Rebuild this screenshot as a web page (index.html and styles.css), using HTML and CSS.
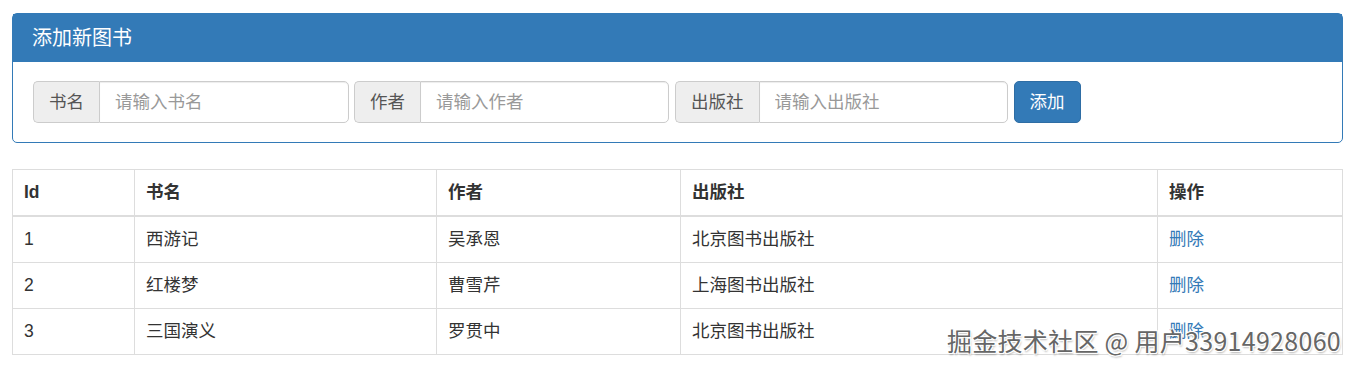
FILE: index.html
```html
<!DOCTYPE html>
<html lang="zh-CN">
<head>
    <meta charset="UTF-8">
    <meta name="viewport" content="width=device-width, initial-scale=1.0">
    <title>图书管理</title>
    <link rel="stylesheet" href="styles.css">
</head>
<body>
<div class="container">
    <!-- Add book panel -->
    <div class="panel">
        <div class="panel-heading">添加新图书</div>
        <div class="panel-body">
            <form class="form-inline">
                <div class="input-group">
                    <span class="addon">书名</span>
                    <input type="text" class="form-control" placeholder="请输入书名">
                </div>
                <div class="input-group">
                    <span class="addon">作者</span>
                    <input type="text" class="form-control" placeholder="请输入作者">
                </div>
                <div class="input-group">
                    <span class="addon">出版社</span>
                    <input type="text" class="form-control" placeholder="请输入出版社">
                </div>
                <button type="button" class="btn-primary">添加</button>
            </form>
        </div>
    </div>

    <!-- Book list -->
    <table class="table">
        <thead>
            <tr>
                <th class="col-id">Id</th>
                <th class="col-name">书名</th>
                <th class="col-author">作者</th>
                <th class="col-pub">出版社</th>
                <th>操作</th>
            </tr>
        </thead>
        <tbody>
            <tr>
                <td>1</td>
                <td>西游记</td>
                <td>吴承恩</td>
                <td>北京图书出版社</td>
                <td><a href="#">删除</a></td>
            </tr>
            <tr>
                <td>2</td>
                <td>红楼梦</td>
                <td>曹雪芹</td>
                <td>上海图书出版社</td>
                <td><a href="#">删除</a></td>
            </tr>
            <tr>
                <td>3</td>
                <td>三国演义</td>
                <td>罗贯中</td>
                <td>北京图书出版社</td>
                <td><a href="#">删除</a></td>
            </tr>
        </tbody>
    </table>
</div>

<div class="watermark">掘金技术社区 @ 用户33914928060</div>
</body>
</html>
```

FILE: styles.css
```css
* {
    box-sizing: border-box;
}

body {
    margin: 0;
    font-family: "Helvetica Neue", Arial, "Liberation Sans", "Noto Sans CJK SC", sans-serif;
    font-size: 17.5px;
    line-height: 25px;
    color: #333;
    background-color: #fff;
}

.container {
    padding: 13px 12px 0 12px;
}

/* Panel */
.panel {
    border: 1px solid #337ab7;
    border-radius: 5px;
    margin-bottom: 26px;
}

.panel-heading {
    background-color: #337ab7;
    color: #fff;
    font-size: 20px;
    line-height: 22px;
    padding: 13px 19px 12px;
    border-bottom: 1px solid #337ab7;
}

.panel-body {
    padding: 19px 20px 19px 20px;
}

/* Inline form */
.form-inline {
    display: flex;
    gap: 5px;
}

.input-group {
    display: flex;
}

.addon {
    padding: 7.5px 15px;
    background-color: #eee;
    border: 1px solid #ccc;
    border-right: none;
    border-radius: 5px 0 0 5px;
    color: #555;
}

.form-control {
    width: 250px;
    height: 42px;
    padding: 7.5px 15px;
    border: 1px solid #ccc;
    border-radius: 0 5px 5px 0;
    font: inherit;
    color: #555;
    box-shadow: inset 0 1px 1px rgba(0, 0, 0, 0.075);
}

.form-control::placeholder {
    color: #999;
}

.input-group:nth-child(2) .form-control {
    width: 249px;
}

.input-group:nth-child(3) {
    margin-left: 1px;
}

.input-group:nth-child(3) .form-control {
    width: 249px;
}

.btn-primary {
    margin-left: 1px;
    height: 42px;
    padding: 7.5px 15px;
    background-color: #337ab7;
    border: 1px solid #2e6da4;
    border-radius: 5px;
    color: #fff;
    font: inherit;
    cursor: pointer;
}

/* Table */
.table {
    width: 100%;
    border-collapse: collapse;
    border: 1px solid #ddd;
}

.table th,
.table td {
    border: 1px solid #ddd;
    padding: 10px 11px;
    text-align: left;
    vertical-align: top;
}

.table thead th {
    border-bottom: 2px solid #ddd;
    font-weight: bold;
}

.col-id { width: 122px; }
.col-name { width: 302px; }
.col-author { width: 244px; }
.col-pub { width: 477px; }

.table a {
    color: #337ab7;
    text-decoration: none;
}

/* Watermark */
.watermark {
    position: absolute;
    right: 14px;
    top: 325px;
    font-family: "Noto Sans CJK SC", sans-serif;
    font-size: 25px;
    line-height: 30px;
    letter-spacing: 0.3px;
    color: #666;
    text-shadow: 1px 1px 0 #fff, -1px -1px 0 #fff, 1px -1px 0 #fff, -1px 1px 0 #fff, 1px 2px 2px rgba(0, 0, 0, 0.3);
    pointer-events: none;
}
```
